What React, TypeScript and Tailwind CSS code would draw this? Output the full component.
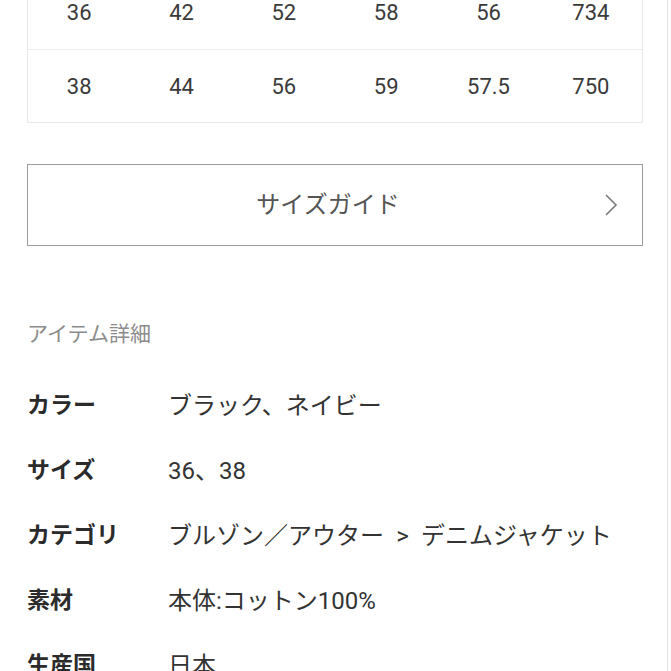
const rows = [
  ['36', '42', '52', '58', '56', '734'],
  ['38', '44', '56', '59', '57.5', '750'],
]

const details = [
  { label: 'カラー', value: 'ブラック、ネイビー' },
  { label: 'サイズ', value: '36、38' },
  { label: 'カテゴリ', value: 'ブルゾン／アウター\u2002>\u2002デニムジャケット' },
  { label: '素材', value: '本体:コットン100%' },
  { label: '生産国', value: '日本' },
]

export default function App() {
  return (
    <div className="h-[671px] w-[671px] overflow-hidden bg-white font-['Roboto','Noto_Sans_CJK_JP',sans-serif]">
      <div className="min-h-full w-[668px] border-r border-[#e2e2e2] pl-[27px] pr-[24px]">
        {/* size table */}
        <div className="-mt-[25px] border border-[#e8e8e8]">
          {rows.map((r, i) => (
            <div
              key={i}
              className={`grid h-[73px] grid-cols-6 items-center text-center text-[22px] text-[#3a3a3a] ${
                i > 0 ? 'border-t border-[#ededed]' : ''
              }`}
            >
              {r.map((v, j) => (
                <span key={j}>{v}</span>
              ))}
            </div>
          ))}
        </div>

        <button
          type="button"
          className="relative mt-[41px] flex h-[82px] w-full items-center justify-center border border-[#9c9c9c] pr-[14px] text-[24px] text-[#555]"
        >
          サイズガイド
          <svg
            className="absolute right-[24px] top-1/2 -translate-y-1/2"
            width="14"
            height="24"
            viewBox="0 0 14 24"
            fill="none"
          >
            <polyline points="2,2 12,12 2,22" stroke="#7a7a7a" strokeWidth="1.6" />
          </svg>
        </button>

        <h3 className="mt-[74px] flex h-[30px] items-center text-[21px] text-[#8c8c8c]">アイテム詳細</h3>

        <dl className="mt-[24px]">
          {details.map((d) => (
            <div key={d.label} className="flex h-[65px] items-center">
              <dt className="w-[141px] shrink-0 text-[23px] font-bold text-[#2b2b2b]">{d.label}</dt>
              <dd className="-mt-[2px] text-[24px] text-[#333]">{d.value}</dd>
            </div>
          ))}
        </dl>
      </div>
    </div>
  )
}
